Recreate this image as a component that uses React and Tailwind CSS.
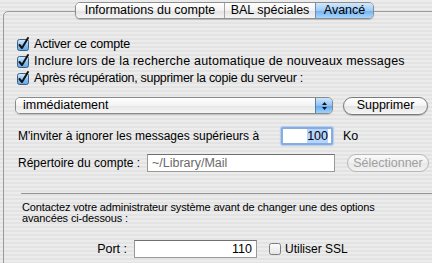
import React from 'react';

const font = { fontFamily: '"Liberation Sans", Arial, sans-serif' };

function CheckBox({ checked }) {
  return (
    <svg width="12" height="12" viewBox="0 0 12 12" className="shrink-0 overflow-visible">
      <defs>
        <linearGradient id="cbBlue" x1="0" y1="0" x2="0" y2="1">
          <stop offset="0" stopColor="#d9ecfd" />
          <stop offset="0.5" stopColor="#8cc4f3" />
          <stop offset="1" stopColor="#5fa6ea" />
        </linearGradient>
        <linearGradient id="cbWhite" x1="0" y1="0" x2="0" y2="1">
          <stop offset="0" stopColor="#fdfdfd" />
          <stop offset="1" stopColor="#e4e4e4" />
        </linearGradient>
      </defs>
      <rect
        x="0.5"
        y="0.5"
        width="11"
        height="11"
        rx="2"
        fill={checked ? 'url(#cbBlue)' : 'url(#cbWhite)'}
        stroke={checked ? '#3e5f82' : '#7d7d7d'}
      />
      {checked && (
        <path d="M2.5 6 L5 9 L11 -1" fill="none" stroke="#111" strokeWidth="2" strokeLinecap="round" strokeLinejoin="round" />
      )}
    </svg>
  );
}

function CheckRow({ label, track }) {
  return (
    <div className="flex items-center h-[17px] gap-[5px]">
      <CheckBox checked />
      <span className={`text-[12.5px] text-black leading-none whitespace-nowrap ${track || ''}`}>{label}</span>
    </div>
  );
}

export default function App() {
  return (
    <div
      className="w-[432px] h-[263px] overflow-hidden bg-[repeating-linear-gradient(180deg,#ececec_0px,#ececec_2px,#e3e3e3_2px,#e3e3e3_4px)] text-black"
      style={font}
    >
      {/* tabs */}
      <div className="relative z-10 flex pt-[2px] pl-[75px] h-[19px]">
        <div className="flex h-[17px] rounded-[5px] border border-[#8e8e8e] overflow-hidden shadow-[0_1px_1px_rgba(0,0,0,0.2)] text-[12.5px] leading-none whitespace-nowrap">
          <div className="w-[149px] flex items-center justify-center bg-[linear-gradient(180deg,#ffffff,#f2f2f2_50%,#e2e2e2_51%,#f4f4f4)] border-r border-[#a5a5a5]">
            Informations du compte
          </div>
          <div className="w-[91px] flex items-center justify-center bg-[linear-gradient(180deg,#ffffff,#f2f2f2_50%,#e2e2e2_51%,#f4f4f4)] border-r border-[#6d8fb5]">
            BAL spéciales
          </div>
          <div className="w-[57px] flex items-center justify-center bg-[linear-gradient(180deg,#d3e8fc,#9fcaf5_50%,#6fb0f0_51%,#a9d8fd)]">
            Avancé
          </div>
        </div>
      </div>

      {/* group box */}
      <div className="-mt-[8px] ml-[3px] w-[440px] h-[270px] border border-[#9a9a9a] rounded-[5px] pl-[13px] pt-[24px]">
        <div className="flex flex-col">
          <CheckRow label="Activer ce compte" track="tracking-[-0.2px]" />
          <CheckRow label="Inclure lors de la recherche automatique de nouveaux messages" track="tracking-[0.2px]" />
          <CheckRow label="Après récupération, supprimer la copie du serveur :" track="tracking-[-0.3px]" />
        </div>

        <div className="flex items-center mt-[10px] -ml-[2px] h-[17px]">
          <div className="flex shrink-0 w-[318px] h-[17px] rounded-[5px] border border-[#8a8a8a] overflow-hidden shadow-[0_1px_1px_rgba(0,0,0,0.15)]">
            <div className="flex-1 flex items-center pl-[7px] text-[12.5px] leading-none bg-[linear-gradient(180deg,#ffffff,#f3f3f3_50%,#e6e6e6_51%,#f6f6f6)]">
              immédiatement
            </div>
            <div className="w-[17px] flex flex-col items-center justify-center gap-[2px] bg-[linear-gradient(180deg,#cfe6fc,#8fc3f5_50%,#5ea6ee_51%,#9fd2fc)] border-l border-[#5b7ea8]">
              <svg width="5" height="3" viewBox="0 0 5 3"><path d="M0 3 L2.5 0 L5 3Z" fill="#111" /></svg>
              <svg width="5" height="3" viewBox="0 0 5 3"><path d="M0 0 L2.5 3 L5 0Z" fill="#111" /></svg>
            </div>
          </div>
          <div className="ml-[10px] shrink-0 w-[85px] h-[18px] rounded-full border border-[#7a7a7a] flex items-center justify-center text-[12.5px] leading-none bg-[linear-gradient(180deg,#ffffff,#f3f3f3_50%,#e4e4e4_51%,#f6f6f6)] shadow-[0_1px_1px_rgba(0,0,0,0.2)]">
            Supprimer
          </div>
        </div>

        <div className="flex items-center mt-[13px] ml-[1px] h-[18px]">
          <span className="w-[263px] shrink-0 whitespace-nowrap text-[12px] leading-none">M'inviter à ignorer les messages supérieurs à</span>
          <div className="w-[52px] shrink-0 h-[18px] rounded-[2px] border-[2px] border-[#86ade0] shadow-[0_0_1px_1px_#b3cdef] bg-white flex items-center justify-end pr-[3px]">
            <span className="bg-[#b5d5ff] text-[12.5px] leading-none py-[1px]">100</span>
          </div>
          <span className="ml-[10px] text-[12.5px] leading-none">Ko</span>
        </div>

        <div className="flex items-center mt-[9px] ml-[1px] h-[18px]">
          <span className="w-[129px] shrink-0 whitespace-nowrap text-[12px] leading-none">Répertoire du compte :</span>
          <div className="w-[188px] shrink-0 h-[18px] border border-[#9a9a9a] border-t-[#6f6f6f] bg-white flex items-center pl-[4px] text-[12.5px] leading-none text-[#6a6a6a]">
            ~/Library/Mail
          </div>
          <div className="ml-[12px] shrink-0 w-[82px] h-[18px] rounded-full border border-[#b8b8b8] flex items-center justify-center text-[12.5px] leading-none text-[#a0a0a0] bg-[linear-gradient(180deg,#fafafa,#f0f0f0_50%,#e8e8e8_51%,#f3f3f3)]">
            Sélectionner
          </div>
        </div>

        <div className="mt-[21px] ml-[4px] h-px bg-[#959595] w-[420px]" />

        <div className="mt-[8px] ml-[5px] text-[11px] leading-[11px] tracking-[-0.14px] whitespace-nowrap">
          Contactez votre administrateur système avant de changer une des options
          <br />
          avancées ci-dessous :
        </div>

        <div className="flex items-center mt-[16px] h-[18px]">
          <span className="w-[117px] shrink-0 text-right pr-[7px] text-[12.5px] leading-none">Port :</span>
          <div className="w-[123px] shrink-0 h-[18px] border border-[#9a9a9a] border-t-[#6f6f6f] bg-white flex items-center justify-end pr-[4px] text-[12.5px] leading-none">
            110
          </div>
          <div className="ml-[12px] flex items-center gap-[4px]">
            <CheckBox />
            <span className="text-[12px] leading-none whitespace-nowrap">Utiliser SSL</span>
          </div>
        </div>
      </div>
    </div>
  );
}
